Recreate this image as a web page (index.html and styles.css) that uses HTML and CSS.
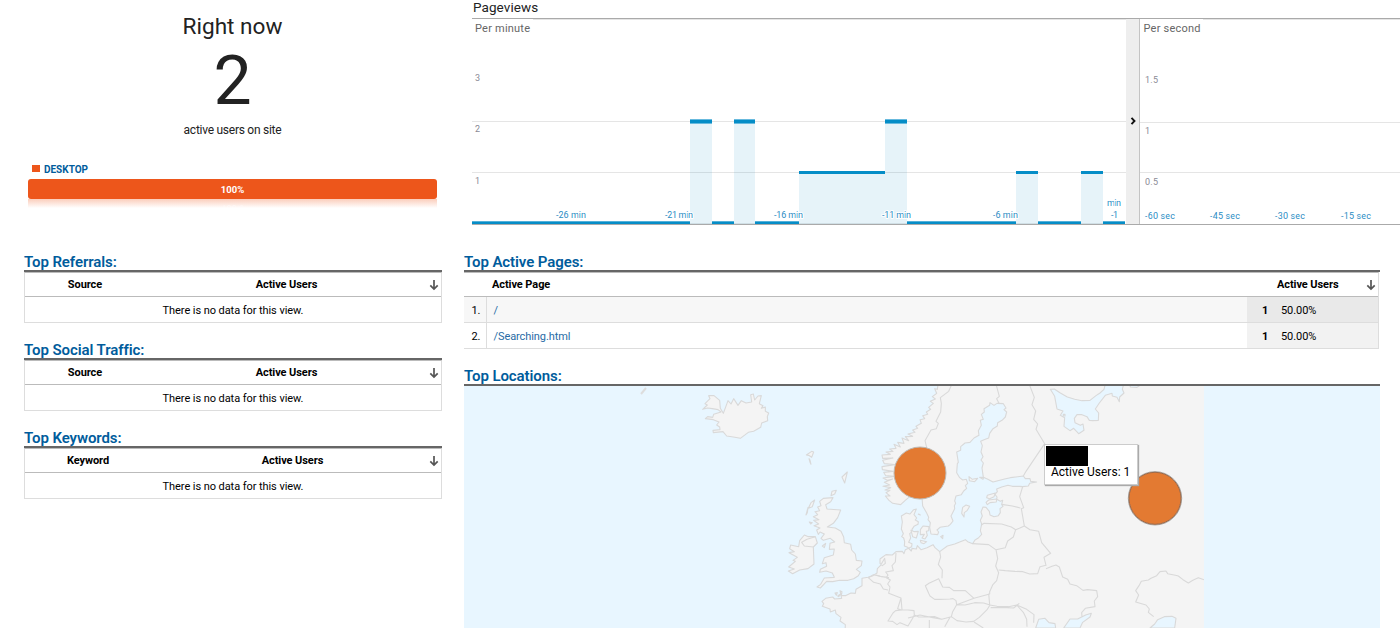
FILE: index.html
```html
<!DOCTYPE html>
<html lang="en">
<head>
<meta charset="utf-8">
<title>Real-time overview</title>
<link rel="stylesheet" href="styles.css">
</head>
<body>
<svg class="defs" width="0" height="0"><symbol id="down" viewBox="0 0 10 12"><path d="M5 1v9M1.300 6.300 5 10l3.700-3.700" fill="none" stroke="#555" stroke-width="1.700"/></symbol></svg>
<main class="page">
  <section class="overview">
    <div class="now">
      <h1 class="now-title">Right now</h1>
      <div class="now-count">2</div>
      <div class="now-note">active users on site</div>
      <div class="legend"><i class="swatch"></i><span>DESKTOP</span></div>
      <div class="device-bar">100%</div>
      <div class="reflection"><span>100%</span></div>
    </div>
    <div class="pageviews">
      <h2 class="pv-title">Pageviews</h2>
      <div class="charts">
        <svg class="minute" viewBox="472 19 654 205">
          <path d="M533 19.500h593" stroke="#e5e5e5"/>
          <path d="M472 121.500h654M472 172.500h654" stroke="#e5e5e5"/>
          <g fill="#058dc7" fill-opacity=".1"><path d="M690 121h22v103h-22zM734 121h21v103h-21zM799 172h86v-51h22v103H799zM1016 172h22v52h-22zM1081 172h22v52h-22z"/></g>
          <path d="M690 223.500h413" stroke="#d0dfe5"/>
          <path d="M472 221h218v3H472zM712 221h22v3h-22zM755 221h44v3h-44zM907 221h109v3H907zM1038 221h43v3h-43zM1103 221h22v3h-22z" fill="#54b0d8"/>
          <path d="M472 222h218v2H472zM712 222h22v2h-22zM755 222h44v2h-44zM907 222h109v2H907zM1038 222h43v2h-43zM1103 222h22v2h-22z" fill="#058dc7"/>
          <path d="M690 119h22v5h-22zM734 119h21v5h-21zM885 119h22v5h-22z" fill="#68bade"/>
          <path d="M690 120h22v3h-22zM734 120h21v3h-21zM885 120h22v3h-22zM799 171h86v3h-86zM1016 171h22v3h-22zM1081 171h22v3h-22z" fill="#058dc7"/>
          <text class="cap" x="475" y="32" textLength="55">Per minute</text>
          <g class="tick"><text x="475" y="81">3</text><text x="475" y="132">2</text><text x="475" y="184">1</text></g>
          <g class="time">
            <text x="556" y="218" textLength="30">-26 min</text><text x="665" y="218" textLength="28">-21 min</text><text x="774" y="218" textLength="29">-16 min</text><text x="882" y="218" textLength="29">-11 min</text><text x="993" y="218" textLength="25">-6 min</text><text x="1107" y="206" textLength="14">min</text><text x="1111" y="218" textLength="7">-1</text>
          </g>
        </svg>
        <div class="handle"><svg viewBox="0 0 6 8" width="6" height="8"><path d="M1.500 .8 4.500 4 1.500 7.200" fill="none" stroke="#111" stroke-width="1.900"/></svg></div>
        <svg class="second" viewBox="1140 19 260 205">
          <path d="M1203 19.500h197M1140 122.500h260M1140 172.500h260" stroke="#e5e5e5"/>
          <text class="cap" x="1143.500" y="32" textLength="57">Per second</text>
          <g class="tick"><text x="1145" y="83" textLength="13">1.5</text><text x="1145" y="134">1</text><text x="1145" y="185" textLength="13">0.5</text></g>
          <g class="time"><text x="1145" y="219" textLength="30">-60 sec</text><text x="1210" y="219" textLength="30">-45 sec</text><text x="1275" y="219" textLength="30">-30 sec</text><text x="1341" y="219" textLength="30">-15 sec</text></g>
        </svg>
      </div>
    </div>
  </section>
  <section class="reports">
    <div class="side">
      <section class="report">
        <h3 class="head">Top Referrals:</h3>
        <div class="table"><div class="thead"><b class="c1">Source</b><b class="c2">Active Users</b><svg class="sort"><use href="#down"/></svg></div><div class="empty">There is no data for this view.</div></div>
      </section>
      <section class="report">
        <h3 class="head">Top Social Traffic:</h3>
        <div class="table"><div class="thead"><b class="c1">Source</b><b class="c2">Active Users</b><svg class="sort"><use href="#down"/></svg></div><div class="empty">There is no data for this view.</div></div>
      </section>
      <section class="report">
        <h3 class="head">Top Keywords:</h3>
        <div class="table keywords"><div class="thead"><b class="c1">Keyword</b><b class="c2">Active Users</b><svg class="sort"><use href="#down"/></svg></div><div class="empty">There is no data for this view.</div></div>
      </section>
    </div>
    <div class="wide">
      <section class="report">
        <h3 class="head">Top Active Pages:</h3>
        <div class="table pages">
          <div class="thead"><b class="page-col">Active Page</b><b class="users-col">Active Users</b><svg class="sort"><use href="#down"/></svg></div>
          <div class="row odd"><span class="num">1.</span><a class="link">/</a><span class="users"><b>1</b><span>50.00%</span></span></div>
          <div class="row"><span class="num">2.</span><a class="link">/Searching.html</a><span class="users"><b>1</b><span>50.00%</span></span></div>
        </div>
      </section>
      <section class="report locations">
        <h3 class="head">Top Locations:</h3>
        <div class="map">
          <svg class="map-art" viewBox="464 386 916 242">
            <g class="land" transform="translate(860 380) scale(.33333)">
              <!-- Continental Europe and Scandinavia -->
              <path d="M1040 0H236L232 28 224 26 230 40 217 50 226 57 211 64 220 70 206 82 212 88 199 96 203 103 188 107 194 116 180 119 184 130 168 139 173 145 158 150 165 157 144 162 158 169 136 170 146 182 126 174 132 190 113 187 121 201 102 193 108 205 89 207 99 214 78 216 91 223 66 225 68 235 99 234 68 241 73 251 104 254 66 260 67 269 99 274 71 277 77 287 103 289 69 294 82 301 98 297 73 307 89 315 69 319 92 323 75 330 90 331 78 338 90 348 76 348 87 361 98 370 122 374 135 362 149 350 160 344 178 342 186 353 188 378 200 399 206 412 204 419 211 428 209 443 213 462 233 464 236 456 231 450 240 442 265 438 271 433 279 423 273 408 278 398 284 386 283 377 287 370 284 363 288 348 304 344 311 333 320 325 316 317 323 310 319 298 308 300 299 293 290 278 292 251 295 247 290 216 302 211 302 200 315 189 330 187 342 174 357 166 355 152 364 136 361 121 370 118 364 103 373 96 372 86 389 76 390 68 402 76 411 70 430 71 438 84 432 89 440 96 436 111 426 121 413 128 412 138 399 146 389 160 386 174 372 179 362 184 367 197 363 216 369 230 363 240 370 249 366 264 370 292 382 297 399 306 434 297 451 293 490 288 496 296 510 296 512 304 530 306 509 310 505 318 488 320 479 319 457 319 444 316 425 321 410 327 412 335 405 343 411 351 410 358 421 364 428 361 425 373 429 379 420 386 421 398 415 407 402 410 390 405 388 394 378 382 369 381 363 396 367 408 361 421 365 432 361 452 365 463 355 474 345 480 338 491 323 485 316 479 284 492 262 498 239 515 225 503 219 494 201 503 183 509 172 497 169 507 156 505 154 513 143 502 133 498 134 485 131 474 125 470 130 461 124 447 127 426 124 408 139 399 150 402 161 389 169 387 162 404 170 414 166 420 175 425 174 433 162 439 156 448 157 455 149 461 152 474 146 487 156 491 155 500 136 509 132 521 127 514 108 515 97 525 78 524 68 531 60 537 60 550 67 557 76 550 74 535 61 557 52 566 51 579 39 587 24 592 6 595 6 617 -12 628 -14 640 -27 639 -44 647 -56 646 -54 635 -60 632 -55 655 -76 657 -82 651 -103 655 -114 664 -109 671 -113 679 -90 687 -89 696 -74 690 -72 701 -57 712 -60 723 -44 734 -45 760H1040z"/>
              <!-- Baltic and Danish islands -->
              <path d="M308 382 318 375 329 379 322 391 313 398 312 411 305 400zM382 346 406 339 402 350 389 356 380 353zM386 360 410 357 409 366 390 368 382 374 378 367zM327 290 337 298 353 295 344 305 328 302zM181 449 189 438 207 440 206 452 199 454 202 466 195 477 186 474 193 463 181 464zM153 451 163 455 175 454 169 474 158 470zM181 481 200 485 192 491 183 488zM359 292h12l-2 6zM242 470l7-4-1 10zM176 402l5 3-6-2z"/>
              <!-- Northern inlets and the Black, Azov and Caspian seas -->
              <g class="sea">
                <path d="M571 28 583 27 601 39 622 51 644 58 666 62 690 61 708 47 720 39 732 28 735 16H790L787 28 792 39 779 51 778 65 771 52 757 48 756 40 736 46 718 69 706 87 716 99 715 121 698 122 688 121 681 110 666 104 651 104 643 115 645 128 661 136 669 132 672 151 656 161 641 145 630 152 612 139 614 113 601 106 609 93 591 87 584 49z"/>
                <path d="M610 103h5v5h-5zM810 16h30l-9 6-20-1zM527 744 536 718 555 715 567 728 585 731 587 744zM611 744 630 717 653 717 677 705 694 700 690 711 668 727 660 744zM870 744 884 732 893 719 913 710 936 709 948 715 944 744z"/>
              </g>
              <!-- Borders -->
              <path class="border" d="M274 16 266 34 241 53 244 70 242 96 228 124 235 130 229 146 213 150 195 182 200 202 195 220M409 16 418 49 410 56 417 70M509 16 523 52 516 74 527 93 521 118 533 132 528 148 554 191 498 274 490 288M488 320 479 350 491 383 484 386 493 438 478 445 467 449 454 441 425 432 372 430 363 436M425 373 457 378 481 384M467 449 460 471 443 483 436 503 408 509 413 536 407 558 416 578 410 602 398 615 389 635 389 642 342 655 316 632 281 632 268 622 248 621 236 596 207 610 196 617 206 640 210 648 224 658 239 658 270 657 279 656 288 662 290 674 278 695 274 710 245 718 225 710 176 711 163 705 162 692 144 690 124 690 113 686 123 654 86 640 90 621 83 612 91 600 79 593 84 585 77 576 100 572 96 557 106 546 108 519M338 491 386 494 407 509M239 515 242 531 235 553 247 570 246 595M493 438 510 449 536 454 545 488 572 520 552 532 558 556 540 560 533 581 509 582 489 575 465 574 436 572 416 570M558 566 576 559 588 555 598 561 608 591 623 598 630 612 650 617 669 631 683 629 710 632 713 650 703 663 705 680 676 685 665 698 666 710M24 592 41 607 61 612 70 627 84 630M48 585 65 590 87 593M123 654 126 690 107 692 99 699 84 723 98 724 111 734 120 728 144 738 158 715 163 705M144 714 180 705 219 713 245 718 274 710 291 722 318 726 341 724 358 712 382 688 390 675 371 669 344 668 315 675 290 674M342 655 318 664 290 674M386 640 389 675 411 679 446 680 470 675 500 688 522 704 521 728M470 675 490 697 500 718 501 740M392 683 421 682 461 684 478 670M254 740 270 712M208 720 208 744M342 726 370 744"/>
              <path class="border" d="M1032 599 1015 593 1000 600 985 609 969 599 955 588 946 586 923 581 918 573 900 575 890 587 873 595 865 600 844 604 837 617 827 632 836 645 827 666 858 675 868 687 865 697 881 710"/>
            </g>
            <g class="land" transform="translate(680 380) scale(.33333)">
              <!-- Iceland -->
              <path d="M68 88 82 75 75 71 90 56 86 47 102 47 119 61 121 85 130 100 144 62 153 72 161 56 174 76 184 62 198 69 215 66 212 44 220 42 224 60 234 48 244 47 238 71 249 77 244 85 256 81 256 94 266 99 262 110 263 122 245 129 242 142 221 154 205 157 181 175 160 171 140 168 129 155 100 158 99 151 120 149 119 141 110 135 117 126 100 119 76 116 83 110 98 112 101 103 123 96 114 89 97 86 83 84z"/>
              <!-- Great Britain -->
              <path d="M419 364 430 355 459 353 452 365 437 374 441 387 482 390 473 413 460 430 442 441 466 444 483 454 491 471 493 488 512 493 515 510 526 522 529 541 546 543 544 557 529 568 541 577 535 587 521 596 504 601 479 601 458 605 440 604 421 624 411 621 422 613 433 594 463 592 457 579 438 573 419 577 421 568 440 559 438 548 427 551 433 533 460 525 463 507 448 508 450 490 464 486 451 475 430 481 423 475 433 462 420 456 415 463 410 450 420 444 402 437 416 432 401 421 417 419 400 410 413 404 405 395 419 392 413 381 423 377z"/>
              <!-- Ireland -->
              <path d="M359 482 373 465 385 470 406 470 412 489 400 501 402 552 384 566 359 570 338 581 325 573 343 567 326 561 346 544 339 541 352 532 327 518 343 515 329 506 332 495 356 500z"/>
              <!-- Small Atlantic islands -->
              <path d="M379 225 395 214 401 216 395 232 386 226zM387 236l3 4 3 13-3-6zM486 291 502 276 494 309zM453 347 456 334 469 331 464 342zM385 385 393 368 404 360 397 380zM378 405 384 383 382 398zM388 426l9 2-5 4zM427 498l10-8-4 13zM465 639l7-1-3 8zM473 648l12-8-9 10z"/>
              <path class="border" d="M406 470 381 478 365 487 373 498 400 501M565 593 580 584 600 589"/>
            </g>
            <path d="M641 394 646 388" stroke="#ddd" stroke-width="2"/>
            <path d="M1204 386h176v242h-176z" fill="#e8f6ff"/>
            <circle cx="920" cy="473" r="26" fill="#e37a32" stroke="#bdb8b2"/>
            <circle cx="1155" cy="498.300" r="26.700" fill="none" stroke="#aaa8a6"/>
            <circle cx="1155" cy="498.300" r="26" fill="#e37a32" stroke="#9b6848"/>
          </svg>
          <div class="tooltip"><i class="redacted"></i><span>Active Users: 1</span></div>
        </div>
      </section>
    </div>
  </section>
</main>
</body>
</html>
```

FILE: styles.css
```css
* { box-sizing: border-box; }
body { margin: 0; background: #fff; color: #222; font: 11px/14px Roboto, sans-serif; overflow: hidden; }
h1, h2, h3 { margin: 0; font-weight: 400; }
svg { display: block; }
.defs { position: absolute; }
.page { width: 1400px; height: 628px; overflow: hidden; }
.overview { display: grid; grid-template-columns: 472px 1fr; height: 252px; }
.now { padding: 12px 35px 0 28px; text-align: center; }
.now-title { font-size: 22.600px; line-height: 29px; letter-spacing: 0; }
.now-count { font-size: 68px; line-height: 80px; }
.now-note { padding-top: 1px; font-size: 12px; line-height: 16px; letter-spacing: -.26px; }
.legend { display: flex; align-items: center; gap: 4px; margin-top: 24px; padding-left: 4px; height: 14px; color: #005c9c; font-size: 10px; font-weight: 700; }
.legend span { padding-top: 1px; }
.swatch { width: 8px; height: 7px; margin-top: -1px; background: #ed561b; }
.device-bar { margin-top: 3px; height: 20px; line-height: 21px; border-radius: 3px; background: #ed561b; color: #fff; font-size: 9.500px; font-weight: 700; }
.reflection { height: 9px; background: linear-gradient(#fbcdbb, #fff); color: #fff; font-size: 9px; line-height: 18px; }
.reflection span { display: block; transform: scaleY(-1); opacity: .5; }
.pv-title { height: 18px; padding: 1px 0 0 1px; font-size: 13.500px; line-height: 13px; letter-spacing: .08px; }
.charts { display: grid; grid-template-columns: 654px 14px 260px; height: 207px; border-top: 1px solid #aaa; border-bottom: 1px solid #aaa; }
.minute { width: 654px; height: 205px; }
.second { width: 260px; height: 205px; }
.handle { display: flex; justify-content: center; align-items: center; padding-bottom: 1px; background: #eee; border-right: 1px solid #c4c4c4; }
.cap { font-size: 11px; fill: #666; }
.tick { font-size: 9px; fill: #8a8a95; }
.time { font-size: 9px; fill: #2b8cc4; stroke: #fff; stroke-width: 2px; stroke-linejoin: round; paint-order: stroke; }
.reports { display: grid; grid-template-columns: 418px 916px; gap: 22px; padding-left: 24px; }
.side .report { height: 88px; }
.head { height: 20px; border-bottom: 2px solid #666; color: #005c9c; font-size: 15px; line-height: 20px; font-weight: 600; letter-spacing: -.08px; white-space: nowrap; }
.table { border: 1px solid #ddd; border-top-color: #bbb; color: #000; }
.thead { display: grid; grid-template-columns: 120px 283px 14px; align-items: center; height: 24px; border-bottom: 1px solid #bbb; text-align: center; }
.thead b { font-weight: 700; letter-spacing: -.08px; }
.thead .sort { margin-left: 1px; }
.keywords .thead { grid-template-columns: 126px 283px 7px; }
.keywords .thead .sort { margin-left: -5px; }
.sort { width: 10px; height: 12px; }
.empty { height: 25px; line-height: 27px; text-align: center; letter-spacing: -.07px; }
.wide { display: flex; flex-direction: column; gap: 17px; }
.pages { width: 915px; border-left: 0; }
.pages .thead { display: flex; text-align: left; }
.pages .thead .sort { margin-left: 0; }
.page-col { width: 813px; padding-left: 28px; }
.users-col { width: 89px; }
.row { display: grid; grid-template-columns: 23px 760px 131px; grid-template-rows: 25px; height: 26px; line-height: 27px; border-bottom: 1px solid #ddd; letter-spacing: -.08px; }
.row:last-child { height: 25px; border-bottom: 0; }
.odd { background: #f7f7f7; }
.num { padding-left: 7.500px; border-right: 1px solid #ddd; }
.link { padding-left: 6.500px; color: #286ba5; }
.users { display: grid; grid-template-columns: 34px 1fr; background: #f2f2f2; }
.users b { padding-left: 15px; }
.odd .users { background: #e9e9e9; }
.map { position: relative; width: 916px; height: 242px; background: #e8f6ff; overflow: hidden; }
.map-art { width: 916px; height: 242px; }
.land { fill: #f4f4f4; stroke: #d9d9d9; stroke-width: 3.300px; stroke-linejoin: round; }
.sea { fill: #e8f6ff; }
.border { fill: none; }
.tooltip { position: absolute; left: 580px; top: 58px; width: 94px; height: 41px; padding: 2px 0 0 1px; background: #fff; border: 1px solid #ccc; box-shadow: 1px 1px 1px #aaa; color: #000; font: 12px/13px Roboto, sans-serif; white-space: nowrap; }
.tooltip span { display: block; padding: 0 0 0 5px; letter-spacing: 0; }
.redacted { display: block; width: 42px; height: 20px; margin-top: -1px; background: #000; }
```
